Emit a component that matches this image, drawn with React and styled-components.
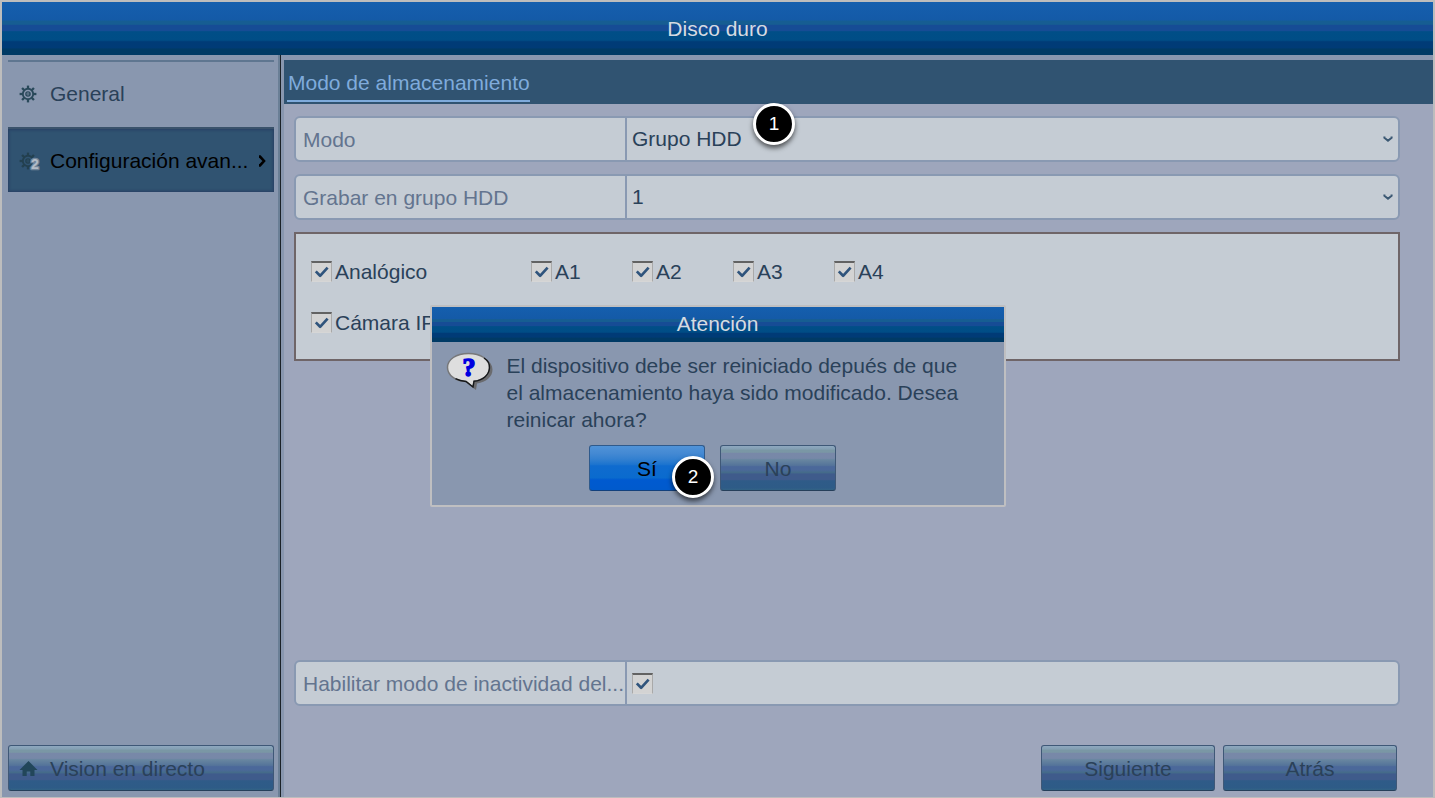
import React, { useState } from "react";
import styled, { createGlobalStyle, css } from "styled-components";

const colors = {
  frame: "#bdbdbd",
  sidebar: "#8997af",
  content: "#9ea6bc",
  field: "#c5ccd4",
  fieldBorder: "#8999b2",
  bar: "#305371",
  tab: "#7fabdc",
  label: "#63748f",
  text: "#2a4159",
  icon: "#29495a",
  line: "#5f7690",
};

const titleGradient = css`
  background: linear-gradient(
    #155fae 0%,
    #145aa7 34%,
    #165d92 36%,
    #165d92 42%,
    #164c95 44%,
    #164c95 54%,
    #004e87 56%,
    #004d86 72%,
    #003b77 75%,
    #003b76 86%,
    #003a65 89%,
    #003a65 100%
  );
`;

const GlobalStyle = createGlobalStyle`
  * {
    box-sizing: border-box;
  }
  body {
    margin: 0;
    font-family: "Liberation Sans", Arial, sans-serif;
    font-size: 21px;
    color: ${colors.text};
  }
`;

const Screen = styled.div`
  position: relative;
  display: flex;
  flex-direction: column;
  min-height: 100vh;
  border: solid ${colors.frame};
  border-width: 2px 2px 1px 2px;
  background: ${colors.sidebar};
`;

const Header = styled.header`
  display: flex;
  align-items: center;
  justify-content: center;
  height: 53px;
  flex-shrink: 0;
  ${titleGradient}
`;

const Title = styled.h1`
  margin: 0;
  font-size: 21px;
  font-weight: normal;
  line-height: 24px;
  color: #d6dbe2;
`;

const Body = styled.div`
  display: flex;
  flex: 1;
`;

const Sidebar = styled.nav`
  display: flex;
  flex-direction: column;
  width: 279px;
  flex-shrink: 0;
  padding: 5px 6px 6px 6px;
  border-right: 1px solid #1c2228;
  box-shadow: inset -2px 0 0 #6a7f96;
`;

const NavItem = styled.a`
  display: flex;
  align-items: center;
  height: 67px;
  padding: 0 7px 2px 11px;
  border-top: 2px solid ${colors.line};
  color: ${colors.text};
  text-decoration: none;
  ${(props) =>
    props.$active &&
    css`
      height: 65px;
      padding-bottom: 0;
      color: #000;
      background: ${colors.bar};
      border-top-color: #3a526b;
      box-shadow: inset 0 0 3px 1px #273f63;
    `}
  span {
    flex: 1;
    white-space: nowrap;
  }
`;

const ItemIcon = styled.svg`
  width: 22px;
  height: 24px;
  flex-shrink: 0;
  margin-right: 9px;
`;

const Arrow = styled.svg`
  width: 10px;
  height: 12px;
  flex-shrink: 0;
`;

const Button = styled.button`
  display: flex;
  align-items: center;
  justify-content: center;
  width: ${(props) => props.$width};
  height: 46px;
  padding: 2px 10px 0;
  border: 1px solid #3f5877;
  border-bottom-color: #263f5a;
  border-radius: 3px;
  font: inherit;
  color: ${colors.text};
  cursor: pointer;
  background: linear-gradient(
    #8ea8bf 0%,
    #85a0b5 6%,
    #7a97a5 10%,
    #7a97a5 14%,
    #7888a8 17%,
    #7788a8 28%,
    #6886a0 31%,
    #55749a 44%,
    #4b689a 47%,
    #4b689a 54%,
    #456c8a 60%,
    #3f5b8b 64%,
    #3f5b8b 76%,
    #2f5b88 79%,
    #2e5b87 95%,
    #326385 100%
  );
  ${(props) =>
    props.$primary &&
    css`
      color: #000;
      border-color: #2f5a8c;
      border-bottom-color: #12407c;
      background: linear-gradient(
        #5093d8 0%,
        #4489d3 17%,
        #3380d0 30%,
        #1c74cf 42%,
        #0f6bcf 45%,
        #0a6bce 72%,
        #005ad0 77%,
        #005acc 100%
      );
    `}
`;

const LiveButton = styled(Button)`
  justify-content: flex-start;
  margin-top: auto;
`;

const Main = styled.main`
  display: flex;
  flex-direction: column;
  flex: 1;
  min-width: 0;
  padding-left: 3px;
`;

const TabBar = styled.div`
  display: flex;
  align-items: flex-end;
  height: 44px;
  margin-top: 5px;
  padding: 0 3px 2px;
  background: ${colors.bar};
`;

const Tab = styled.a`
  height: 34px;
  padding: 3px 0 0 1px;
  border-bottom: 2px solid ${colors.tab};
  line-height: 24px;
  color: ${colors.tab};
  text-decoration: none;
`;

const Content = styled.form`
  display: flex;
  flex-direction: column;
  flex: 1;
  gap: 12px;
  padding: 12px 33px 6px 10px;
  background: ${colors.content};
`;

const Row = styled.div`
  display: flex;
  height: 46px;
  border: 2px solid ${colors.fieldBorder};
  border-radius: 6px;
  background: ${colors.field};
`;

const RowLabel = styled.label`
  display: flex;
  align-items: center;
  width: 331px;
  flex-shrink: 0;
  padding-top: 2px;
  padding-left: 7px;
  border-right: 2px solid ${colors.fieldBorder};
  color: ${colors.label};
  white-space: nowrap;
`;

const RowValue = styled.div`
  position: relative;
  display: flex;
  align-items: center;
  flex: 1;
  padding-left: 5px;
`;

const Select = styled.select`
  appearance: none;
  width: 100%;
  height: 100%;
  padding: 0 0 2px;
  border: none;
  outline: none;
  background: transparent;
  font: inherit;
  color: ${colors.text};
`;

const Chevron = styled.svg`
  position: absolute;
  right: 5px;
  top: 16px;
  width: 10px;
  height: 10px;
  pointer-events: none;
`;

const ChannelPanel = styled.div`
  display: grid;
  grid-template-columns: 220px repeat(4, 101px);
  grid-template-rows: 51px 51px;
  height: 129px;
  padding: 12px 15px;
  border: 2px solid #6f6568;
  background: ${colors.field};
`;

const CheckLabel = styled.label`
  display: flex;
  align-items: center;
  gap: 3px;
  white-space: nowrap;
`;

const CheckBox = styled.span`
  display: grid;
  width: 21px;
  height: 21px;
  input,
  svg {
    grid-area: 1 / 1;
    width: 21px;
    height: 21px;
    margin: 0;
  }
  input {
    appearance: none;
    border: 1px solid #a9a9a9;
    border-top: 2px solid #626262;
    border-bottom-color: #d6d6d6;
    background: #d3d3d3;
  }
  svg {
    pointer-events: none;
  }
`;

const Footer = styled.div`
  display: flex;
  justify-content: flex-end;
  gap: 8px;
  padding-top: 27px;
  padding-right: 3px;
`;

const Spacer = styled.div`
  flex: 1;
`;

const Overlay = styled.div`
  position: absolute;
  inset: 0;
  display: flex;
  align-items: center;
  justify-content: center;
  padding-top: 12px;
`;

const Dialog = styled.section`
  width: 576px;
  border: 2px solid #bfbfc1;
  border-radius: 2px;
  background: ${colors.sidebar};
`;

const DialogHeader = styled.header`
  display: flex;
  align-items: center;
  justify-content: center;
  height: 35px;
  ${titleGradient}
`;

const DialogBody = styled.div`
  display: flex;
  padding: 10px 40px 0 13px;
  svg {
    width: 48px;
    height: 40px;
    flex-shrink: 0;
    margin-right: 14px;
  }
  p {
    margin: 0;
    line-height: 27px;
  }
`;

const DialogActions = styled.div`
  display: flex;
  justify-content: center;
  gap: 15px;
  padding: 12px 22px 14px 12px;
`;

const ButtonHolder = styled.div`
  position: relative;
`;

const Marker = styled.span`
  position: absolute;
  left: ${(props) => props.$left};
  top: ${(props) => props.$top};
  display: flex;
  align-items: center;
  justify-content: center;
  width: 42px;
  height: 42px;
  border: 3px solid #fff;
  border-radius: 50%;
  background: #000;
  color: #fff;
  font-size: 19px;
  box-shadow: 0 3px 5px rgba(0, 0, 0, 0.6);
`;

const teeth = [0, 45, 90, 135, 180, 225, 270, 315];

const Gear = ({ color }) => (
  <g stroke={color} fill="none">
    <circle cx="9" cy="10" r="5.2" strokeWidth="1.9" />
    <circle cx="9" cy="10" r="2.1" strokeWidth="1.4" />
    <path d="M8 10h3" strokeWidth="1" />
    {teeth.map((angle) => (
      <path key={angle} d="M9 1.6v3" strokeWidth="2.3" transform={`rotate(${angle} 9 10)`} />
    ))}
  </g>
);

const Check = ({ id }) => {
  const [checked, setChecked] = useState(true);
  return (
    <CheckBox>
      <input id={id} type="checkbox" checked={checked} onChange={() => setChecked(!checked)} />
      {checked && (
        <svg viewBox="0 0 21 21" fill="none" stroke="#30547c" strokeWidth="2.7">
          <path d="M4.8 10.4l4.3 4.4L16.600 6.600" strokeLinejoin="round" />
        </svg>
      )}
    </CheckBox>
  );
};

const Dropdown = ({ id, options }) => {
  const [value, setValue] = useState(options[0]);
  return (
    <>
      <Select id={id} value={value} onChange={(e) => setValue(e.target.value)}>
        {options.map((option) => (
          <option key={option}>{option}</option>
        ))}
      </Select>
      <Chevron viewBox="0 0 10 10" fill="none" stroke="#3b5873" strokeWidth="2">
        <path d="M1.4 2.6v1.2L5 6.8l3.6-3V2.6" />
      </Chevron>
    </>
  );
};

const App = () => {
  const channels = ["A1", "A2", "A3", "A4"];

  return (
    <>
      <GlobalStyle />
      <Screen>
        <Header>
          <Title>Disco duro</Title>
        </Header>
        <Body>
          <Sidebar>
            <NavItem href="#general">
              <ItemIcon viewBox="0 -2 22 24">
                <Gear color={colors.icon} />
              </ItemIcon>
              <span>General</span>
            </NavItem>
            <NavItem href="#avanzada" $active>
              <ItemIcon viewBox="0 -2 22 24">
                <Gear color="#23404f" />
                <text
                  x="12"
                  y="18"
                  fontSize="14"
                  fontWeight="bold"
                  fill="#b3bcc7"
                  stroke="#71859a"
                  strokeWidth="2.5"
                  strokeLinejoin="round"
                  paintOrder="stroke"
                >
                  2
                </text>
              </ItemIcon>
              <span>Configuración avan...</span>
              <Arrow viewBox="0 0 10 12" fill="none" stroke="#000" strokeWidth="2.6">
                <path d="M2 1.6h1L7 6l-4 4.400H2" />
              </Arrow>
            </NavItem>
            <LiveButton type="button" $width="100%">
              <ItemIcon viewBox="0 -2 22 24" fill="#22465a">
                <path d="M9.5 2L18.5 11H15.5V17H11.3V12.6H7.7V17H3.5V11H.5Z" />
              </ItemIcon>
              Vision en directo
            </LiveButton>
          </Sidebar>
          <Main>
            <TabBar>
              <Tab href="#modo">Modo de almacenamiento</Tab>
            </TabBar>
            <Content onSubmit={(e) => e.preventDefault()}>
              <Row>
                <RowLabel htmlFor="mode">Modo</RowLabel>
                <RowValue>
                  <Dropdown id="mode" options={["Grupo HDD"]} />
                  <Marker $left="126px" $top="-15px">
                    1
                  </Marker>
                </RowValue>
              </Row>
              <Row>
                <RowLabel htmlFor="group">Grabar en grupo HDD</RowLabel>
                <RowValue>
                  <Dropdown id="group" options={["1"]} />
                </RowValue>
              </Row>
              <ChannelPanel>
                <CheckLabel>
                  <Check />
                  Analógico
                </CheckLabel>
                {channels.map((channel) => (
                  <CheckLabel key={channel}>
                    <Check />
                    {channel}
                  </CheckLabel>
                ))}
                <CheckLabel>
                  <Check />
                  Cámara IP
                </CheckLabel>
              </ChannelPanel>
              <Spacer />
              <Row>
                <RowLabel htmlFor="sleep">Habilitar modo de inactividad del...</RowLabel>
                <RowValue>
                  <Check id="sleep" />
                </RowValue>
              </Row>
              <Footer>
                <Button type="submit" $width="174px">
                  Siguiente
                </Button>
                <Button type="button" $width="174px">
                  Atrás
                </Button>
              </Footer>
            </Content>
          </Main>
        </Body>
        <Overlay>
          <Dialog role="dialog" aria-labelledby="dialog-title">
            <DialogHeader>
              <Title as="h2" id="dialog-title">
                Atención
              </Title>
            </DialogHeader>
            <DialogBody>
              <svg viewBox="0 0 48 40">
                <path
                  d="M25 3C38 3 47.5 9 47.5 17.5C47.5 25 41 30 32 31.5L31 38L22 31Z"
                  fill="#6a6b6e"
                />
                <path
                  d="M23.5 1.5C36 1.5 44.5 7.5 44.5 15.5C44.5 23 38 28.5 29 29.3L28 35L21 29.5C10 29 2.5 23 2.5 15.5C2.5 7.5 11 1.5 23.5 1.5Z"
                  fill="#dedede"
                  stroke="#77787a"
                  strokeWidth="1.5"
                />
                <path
                  d="M39 6C43 8.5 44.8 12 44.5 16C44 23 38 28.5 29 29.3L28 35L21 29.5C17 29.2 13.5 28.3 10.5 26.7"
                  fill="none"
                  stroke="#16181a"
                  strokeWidth="1.4"
                />
                <text
                  x="24"
                  y="24"
                  textAnchor="middle"
                  fontFamily="'Liberation Serif', serif"
                  fontWeight="bold"
                  fontSize="26"
                  fill="#0000e0"
                  stroke="#0000e0"
                  strokeWidth="1.5"
                >
                  ?
                </text>
              </svg>
              <p>
                El dispositivo debe ser reiniciado depués de que el almacenamiento haya sido modificado. Desea reinicar
                ahora?
              </p>
            </DialogBody>
            <DialogActions>
              <ButtonHolder>
                <Button type="button" $width="116px" $primary>
                  Sí
                </Button>
                <Marker $left="83px" $top="11px">
                  2
                </Marker>
              </ButtonHolder>
              <Button type="button" $width="116px">
                No
              </Button>
            </DialogActions>
          </Dialog>
        </Overlay>
      </Screen>
    </>
  );
};

export default App;
